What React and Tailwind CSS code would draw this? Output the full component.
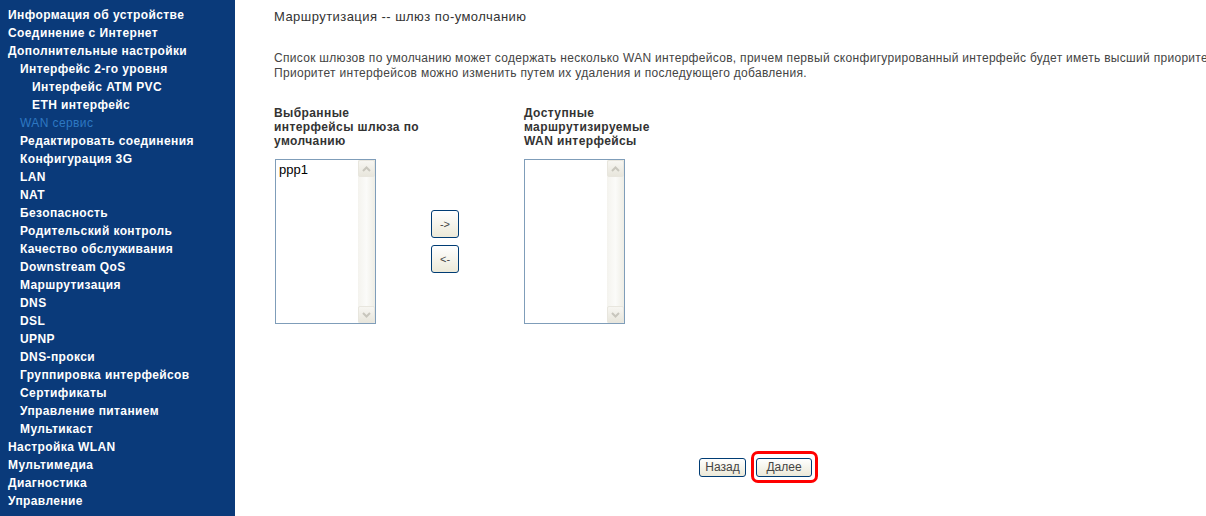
import React from "react";

const menu = [
  { t: "Информация об устройстве", l: 0 },
  { t: "Соединение с Интернет", l: 0 },
  { t: "Дополнительные настройки", l: 0 },
  { t: "Интерфейс 2-го уровня", l: 1 },
  { t: "Интерфейс ATM PVC", l: 2 },
  { t: "ETH интерфейс", l: 2 },
  { t: "WAN сервис", l: 1, active: true },
  { t: "Редактировать соединения", l: 1 },
  { t: "Конфигурация 3G", l: 1 },
  { t: "LAN", l: 1 },
  { t: "NAT", l: 1 },
  { t: "Безопасность", l: 1 },
  { t: "Родительский контроль", l: 1 },
  { t: "Качество обслуживания", l: 1 },
  { t: "Downstream QoS", l: 1 },
  { t: "Маршрутизация", l: 1 },
  { t: "DNS", l: 1 },
  { t: "DSL", l: 1 },
  { t: "UPNP", l: 1 },
  { t: "DNS-прокси", l: 1 },
  { t: "Группировка интерфейсов", l: 1 },
  { t: "Сертификаты", l: 1 },
  { t: "Управление питанием", l: 1 },
  { t: "Мультикаст", l: 1 },
  { t: "Настройка WLAN", l: 0 },
  { t: "Мультимедиа", l: 0 },
  { t: "Диагностика", l: 0 },
  { t: "Управление", l: 0 },
];

const indent = ["pl-[8px]", "pl-[20px]", "pl-[32px]"];

function Chevron({ up }) {
  return (
    <svg width="9" height="6" viewBox="0 0 9 6">
      <path
        d={up ? "M1 5 L4.5 1.5 L8 5" : "M1 1 L4.5 4.5 L8 1"}
        fill="none"
        stroke="#c8c6bd"
        strokeWidth="2"
      />
    </svg>
  );
}

function ListBox({ items }) {
  return (
    <div className="flex h-[165px] w-[101px] border border-[#7f9db9] bg-white">
      <div className="flex-1 px-[3px] pt-[2px] text-[13px] leading-[16px] text-black">
        {items.map((it) => (
          <div key={it}>{it}</div>
        ))}
      </div>
      <div className="flex w-[17px] flex-col justify-between bg-gradient-to-r from-[#f4f3ee] via-[#fbfbf9] to-[#eeede5]">
        <div className="flex h-[17px] items-center justify-center rounded-[2px] border border-[#e8e6de] bg-gradient-to-b from-[#f7f6f2] to-[#e8e6dc]">
          <Chevron up />
        </div>
        <div className="flex h-[17px] items-center justify-center rounded-[2px] border border-[#e8e6de] bg-gradient-to-b from-[#f7f6f2] to-[#e8e6dc]">
          <Chevron />
        </div>
      </div>
    </div>
  );
}

function XpButton({ children, className = "" }) {
  return (
    <button
      className={`rounded-[3px] border border-[#003c74] bg-gradient-to-b from-white to-[#ece9d8] text-[#444] ${className}`}
    >
      {children}
    </button>
  );
}

export default function App() {
  return (
    <div className="flex h-[516px] w-[1206px] overflow-hidden bg-white font-['Liberation_Sans',sans-serif]">
      {/* Меню */}
      <div className="w-[235px] shrink-0 bg-[#0a3a7a] pt-[6px]">
        {menu.map((m) => (
          <div
            key={m.t}
            className={`${indent[m.l]} h-[18px] whitespace-nowrap text-[12px] leading-[18px] tracking-[0.4px] ${
              m.active ? "font-normal text-[#2e78c2]" : "font-bold text-white"
            }`}
          >
            {m.t}
          </div>
        ))}
      </div>

      {/* Содержимое */}
      <div className="flex-1 whitespace-nowrap pl-[39px] pt-[9px] text-[12px] text-[#333]">
        <div className="text-[13px] leading-[16px] tracking-[0.45px]">Маршрутизация -- шлюз по-умолчанию</div>

        <div className="mt-[26px] leading-[15px] tracking-[0.3px] text-[#444]">
          Список шлюзов по умолчанию может содержать несколько WAN интерфейсов, причем первый сконфигурированный интерфейс будет иметь высший приоритет
          <br />
          Приоритет интерфейсов можно изменить путем их удаления и последующего добавления.
        </div>

        <div className="mt-[25px] flex">
          <div className="w-[157px]">
            <div className="h-[53px] font-bold leading-[14px] tracking-[0.4px] text-[#333]">
              Выбранные
              <br />
              интерфейсы шлюза по
              <br />
              умолчанию
            </div>
            <div className="pl-[1px]">
              <ListBox items={["ppp1"]} />
            </div>
          </div>
          <div className="flex w-[93px] flex-col gap-[7px] pt-[104px]">
            <XpButton className="h-[28px] w-[28px] text-[11px]">-&gt;</XpButton>
            <XpButton className="h-[28px] w-[28px] text-[11px]">&lt;-</XpButton>
          </div>
          <div>
            <div className="h-[53px] font-bold leading-[14px] tracking-[0.4px] text-[#333]">
              Доступные
              <br />
              маршрутизируемые
              <br />
              WAN интерфейсы
            </div>
            <ListBox items={[]} />
          </div>
        </div>

        <div className="mt-[134px] flex items-center gap-[10px] pl-[425px]">
          <XpButton className="h-[19px] w-[47px] text-[12px] leading-[17px]">Назад</XpButton>
          <span className="relative">
            <XpButton className="h-[19px] w-[56px] text-[12px] leading-[17px]">Далее</XpButton>
            <span className="pointer-events-none absolute -top-[7px] -bottom-[6px] -left-[5px] -right-[6px] rounded-[7px] border-[3px] border-[#ff0000]" />
          </span>
        </div>
      </div>
    </div>
  );
}
